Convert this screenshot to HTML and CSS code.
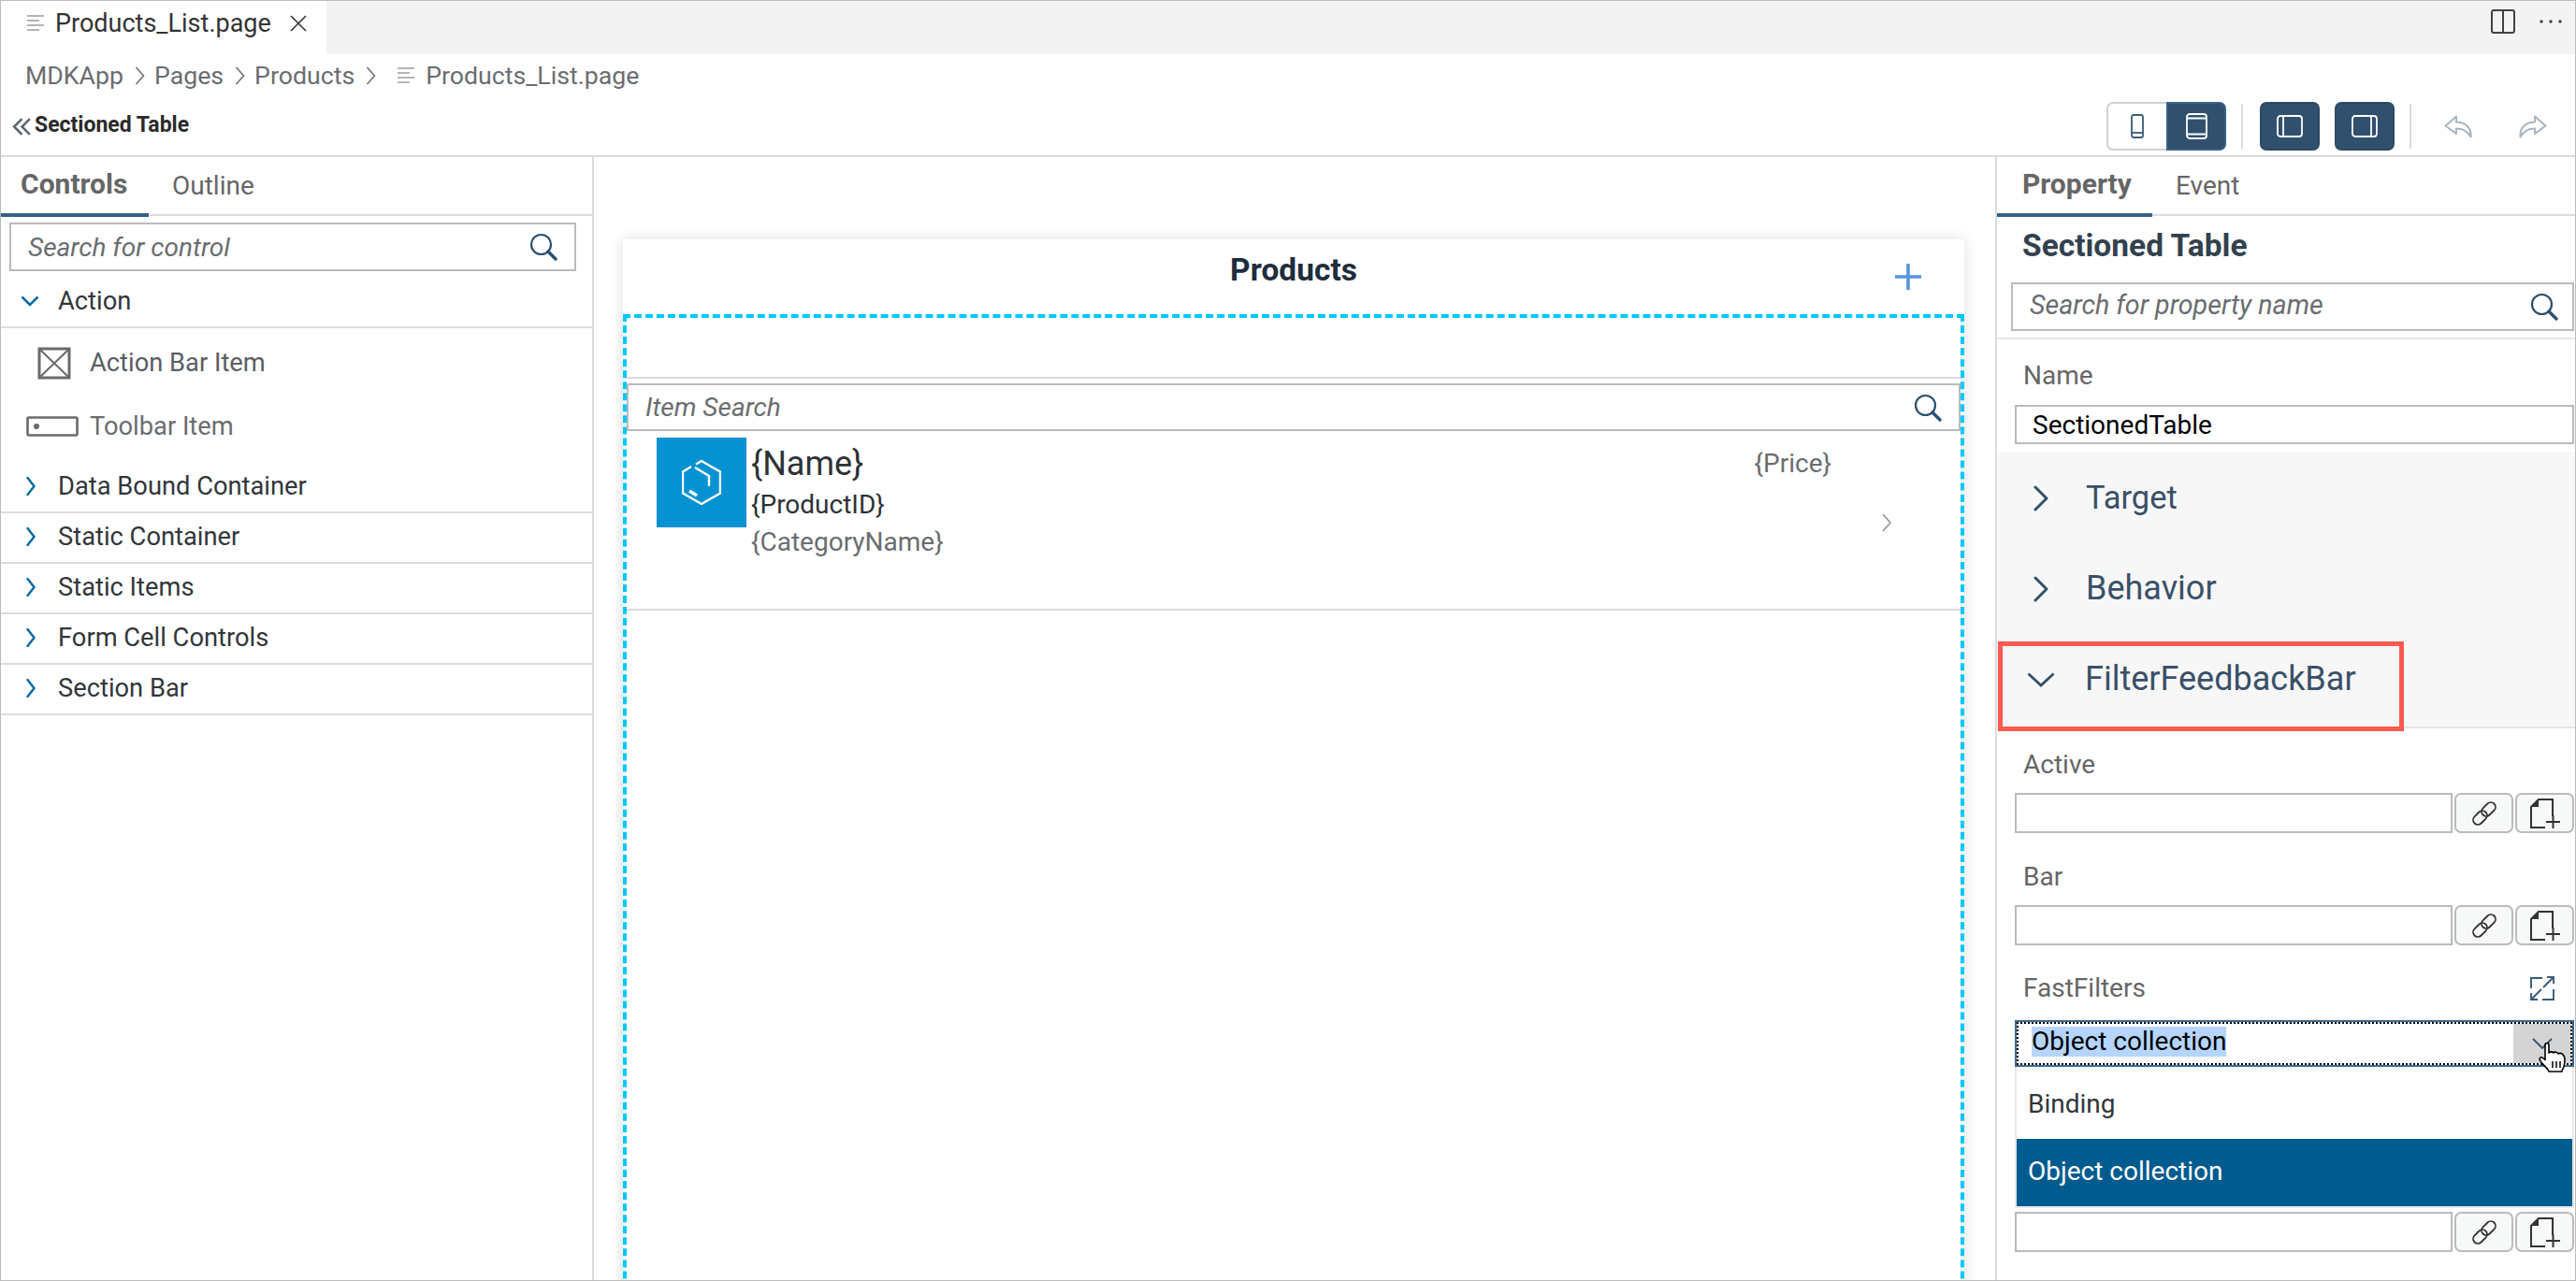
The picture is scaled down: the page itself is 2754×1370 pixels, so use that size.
FILE: index.html
```html
<!DOCTYPE html>
<html lang="en">
<head>
<meta charset="utf-8">
<title>Products_List.page</title>
<link rel="stylesheet" href="styles.css">
</head>
<body>
<svg class="defs" width="0" height="0" aria-hidden="true">
  <symbol id="i-file" viewBox="0 0 18 18"><path d="M0 1h18M0 6h13M0 11h18M0 16h13" fill="none" stroke="#b5b5b5" stroke-width="2.2"/></symbol>
  <symbol id="i-search" viewBox="0 0 30 30"><circle cx="12.5" cy="12.5" r="10.5" fill="none" stroke="#2b4f6e" stroke-width="2.2"/><path d="M20 20l8 8" stroke="#2b4f6e" stroke-width="3.4" stroke-linecap="round"/></symbol>
  <symbol id="i-right" viewBox="0 0 10 20"><path d="M1.500 1l7 9-7 9" fill="none" stroke="currentColor" stroke-width="2.500" stroke-linecap="round" stroke-linejoin="round"/></symbol>
  <symbol id="i-thin" viewBox="0 0 11 20"><path d="M1.500 1l8 9-8 9" fill="none" stroke="currentColor" stroke-width="1.500"/></symbol>
  <symbol id="i-sec" viewBox="0 0 16 28"><path d="M2 2l12 12L2 26" fill="none" stroke="currentColor" stroke-width="3" stroke-linecap="round" stroke-linejoin="round"/></symbol>
  <symbol id="i-link" viewBox="0 0 28 28"><g fill="none" stroke="#333" stroke-width="1.800"><rect x="13.500" y="1" width="10" height="17" rx="5" transform="rotate(45 18.500 9.500)"/><rect x="4.500" y="10" width="10" height="17" rx="5" transform="rotate(45 9.500 18.500)"/></g></symbol>
  <symbol id="i-doc" viewBox="0 0 34 34"><path d="M25 20V2H10L2 10v22h15" fill="none" stroke="#333" stroke-width="2"/><path d="M2 10l8-8v8z" fill="#333"/><path d="M18 26h15M25.500 19v14" fill="none" stroke="#333" stroke-width="2"/></symbol>
</svg>

<div class="app">
  <header class="tabbar">
    <div class="file-tab">
      <svg class="file-icon"><use href="#i-file"/></svg>
      <span class="file-tab-name">Products_List.page</span>
      <svg class="close-icon" viewBox="0 0 18 18"><path d="M1 1l16 16M17 1L1 17" stroke="#333" stroke-width="1.6"/></svg>
    </div>
    <div class="tab-actions">
      <svg class="split-icon" viewBox="0 0 26 26"><rect x="1" y="1" width="24" height="24" rx="2" fill="none" stroke="#424242" stroke-width="2"/><path d="M13 1v24" stroke="#424242" stroke-width="2"/></svg>
      <svg class="dots-icon" viewBox="0 0 24 4"><circle cx="2" cy="2" r="1.700" fill="#424242"/><circle cx="12" cy="2" r="1.700" fill="#424242"/><circle cx="22" cy="2" r="1.700" fill="#424242"/></svg>
    </div>
  </header>

  <nav class="crumbs">
    <span class="crumb-a">MDKApp</span><svg class="crumb-chev"><use href="#i-thin"/></svg>
    <span>Pages</span><svg class="crumb-chev"><use href="#i-thin"/></svg>
    <span>Products</span><svg class="crumb-chev"><use href="#i-thin"/></svg>
    <svg class="file-icon file-icon-crumb"><use href="#i-file"/></svg><span class="crumb-last">Products_List.page</span>
  </nav>

  <div class="toolbar">
    <svg class="back-icon" viewBox="0 0 20 18"><path d="M10 1L2 9l8 8M18 1l-8 8 8 8" fill="none" stroke="#5b6770" stroke-width="2.400"/></svg>
    <span class="toolbar-title">Sectioned Table</span>
    <div class="tools">
      <div class="segmented">
        <button class="tool tool-light"><svg class="phone-icon" viewBox="0 0 14 26"><rect x="1" y="1" width="12" height="24" rx="2" fill="none" stroke="#3d5a75" stroke-width="1.800"/><path d="M1 20h12" stroke="#3d5a75" stroke-width="1.800"/></svg></button>
        <button class="tool tool-dark tool-seg"><svg class="tablet-icon" viewBox="0 0 23 28"><rect x="1" y="1" width="21" height="26" rx="3" fill="none" stroke="#fff" stroke-width="1.800"/><path d="M1 5.500h21M1 22.500h21" stroke="#fff" stroke-width="1.800"/></svg></button>
      </div>
      <i class="tool-sep"></i>
      <button class="tool tool-dark"><svg class="panel-icon" viewBox="0 0 28 24"><rect x="1" y="1" width="26" height="22" rx="3" fill="none" stroke="#fff" stroke-width="1.800"/><path d="M7 1v22" stroke="#fff" stroke-width="1.800"/></svg></button>
      <button class="tool tool-dark"><svg class="panel-icon" viewBox="0 0 28 24"><rect x="1" y="1" width="26" height="22" rx="3" fill="none" stroke="#fff" stroke-width="1.800"/><path d="M21 1v22" stroke="#fff" stroke-width="1.800"/></svg></button>
      <i class="tool-sep"></i>
      <svg class="undo-icon" viewBox="0 0 30 25"><path d="M13 1.500L1.500 11.500 13 20v-5.500c7 0 12 2.500 15.500 9 1-10-6-16-15.500-16z" fill="none" stroke="#a9b5bf" stroke-width="2" stroke-linejoin="round"/></svg>
      <svg class="redo-icon" viewBox="0 0 30 25"><path d="M17 1.500L28.500 11.500 17 20v-5.500c-7 0-12 2.500-15.500 9-1-10 6-16 15.500-16z" fill="none" stroke="#a9b5bf" stroke-width="2" stroke-linejoin="round"/></svg>
    </div>
  </div>

  <main class="main">
    <aside class="left">
      <div class="tabs">
        <div class="tab tab-on tab-controls">Controls</div>
        <div class="tab tab-outline">Outline</div>
      </div>
      <div class="search search-left">
        <span class="placeholder ph-control">Search for control</span>
        <svg class="search-icon"><use href="#i-search"/></svg>
      </div>
      <div class="group group-open">
        <svg class="group-down" viewBox="0 0 20 12"><path d="M1.500 1.500L10 10l8.500-8.500" fill="none" stroke="#0a6ca3" stroke-width="2.600"/></svg>
        <span class="group-label">Action</span>
      </div>
      <div class="sub-list">
        <div class="sub-item">
          <span class="sub-icon"><svg class="abi-icon" viewBox="0 0 36 35"><rect x="2" y="2" width="32" height="31" fill="none" stroke="#6b6b6b" stroke-width="3"/><path d="M3 3l30 29M33 3L3 32" stroke="#6b6b6b" stroke-width="2"/></svg></span>
          <span>Action Bar Item</span>
        </div>
        <div class="sub-item">
          <span class="sub-icon"><svg class="tbi-icon" viewBox="0 0 56 22"><rect x="1.500" y="1.500" width="53" height="19" rx="1.500" fill="none" stroke="#6b6b6b" stroke-width="2.600"/><circle cx="11" cy="11" r="3" fill="#6b6b6b"/></svg></span>
          <span class="sub-muted">Toolbar Item</span>
        </div>
      </div>
      <div class="group"><svg class="group-right"><use href="#i-right"/></svg><span class="group-label">Data Bound Container</span></div>
      <div class="group"><svg class="group-right"><use href="#i-right"/></svg><span class="group-label">Static Container</span></div>
      <div class="group"><svg class="group-right"><use href="#i-right"/></svg><span class="group-label">Static Items</span></div>
      <div class="group"><svg class="group-right"><use href="#i-right"/></svg><span class="group-label">Form Cell Controls</span></div>
      <div class="group"><svg class="group-right"><use href="#i-right"/></svg><span class="group-label">Section Bar</span></div>
    </aside>

    <section class="canvas">
      <div class="card">
        <div class="card-head">
          <span></span>
          <span class="card-title">Products</span>
          <svg class="plus-icon" viewBox="0 0 28 28"><path d="M14 0v28M0 14h28" stroke="#5594da" stroke-width="3.600"/></svg>
        </div>
        <div class="selection">
          <div class="blank-row"></div>
          <div class="search search-item">
            <span class="placeholder ph-item">Item Search</span>
            <svg class="search-icon"><use href="#i-search"/></svg>
          </div>
          <div class="item">
            <div class="tile">
              <svg class="hex-icon" viewBox="0 0 42 48"><path d="M15 4.500L21 1l20 11.500v23L21 47 1 35.500v-23L10 7" fill="none" stroke="#fff" stroke-width="2.400"/><path d="M14 8l15 9v11" fill="none" stroke="#fff" stroke-width="2.400"/><path d="M8 33l8 5" stroke="#fff" stroke-width="3.400"/></svg>
            </div>
            <div class="item-text">
              <div class="item-name">{Name}</div>
              <div class="item-id">{ProductID}</div>
              <div class="item-cat">{CategoryName}</div>
            </div>
            <div class="item-price">{Price}</div>
            <svg class="item-chev" viewBox="0 0 10 20"><path d="M1 1l8 9-8 9" fill="none" stroke="#8a8a8a" stroke-width="1.400"/></svg>
          </div>
        </div>
      </div>
    </section>

    <aside class="right">
      <div class="tabs">
        <div class="tab tab-on tab-property">Property</div>
        <div class="tab tab-event">Event</div>
      </div>
      <h2 class="prop-title">Sectioned Table</h2>
      <div class="prop-search-wrap">
        <div class="search search-prop">
          <span class="placeholder ph-prop">Search for property name</span>
          <svg class="search-icon"><use href="#i-search"/></svg>
        </div>
      </div>
      <div class="field field-name">
        <div class="field-label">Name</div>
        <div class="input input-full"><span class="input-value">SectionedTable</span></div>
      </div>
      <div class="sections">
        <div class="section"><svg class="sec-right"><use href="#i-sec"/></svg><span class="sec-target">Target</span></div>
        <div class="section"><svg class="sec-right"><use href="#i-sec"/></svg><span class="sec-behavior">Behavior</span></div>
        <div class="section">
          <svg class="sec-down" viewBox="0 0 30 16"><path d="M1.500 1.500L15 14 28.500 1.500" fill="none" stroke="#34506b" stroke-width="2.800"/></svg>
          <span class="sec-filter">FilterFeedbackBar</span>
          <div class="callout"></div>
        </div>
      </div>
      <div class="fields">
        <div class="field-label label-active">Active</div>
        <div class="bind-row">
          <div class="input"></div>
          <button class="bind-btn"><svg class="link-icon"><use href="#i-link"/></svg></button>
          <button class="bind-btn"><svg class="doc-icon"><use href="#i-doc"/></svg></button>
        </div>
        <div class="field-label label-bar">Bar</div>
        <div class="bind-row">
          <div class="input"></div>
          <button class="bind-btn"><svg class="link-icon"><use href="#i-link"/></svg></button>
          <button class="bind-btn"><svg class="doc-icon"><use href="#i-doc"/></svg></button>
        </div>
        <div class="field-label label-fast">
          <span>FastFilters</span>
          <svg class="expand-icon" viewBox="0 0 28 28"><g fill="none" stroke="#3c5a76" stroke-width="1.900"><path d="M2 14V3h12M26 15v11H14"/><path d="M15 13L26 2M19 2h7v7"/><path d="M13 15L2 26M2 19v7h7"/></g></svg>
        </div>
        <div class="select">
          <div class="select-inner">
            <span class="select-value">Object collection</span>
            <span class="select-arrow"><svg class="select-chev" viewBox="0 0 22 12"><path d="M1 1l10 10L21 1" fill="none" stroke="#34506b" stroke-width="1.800"/></svg></span>
          </div>
          <svg class="hand" viewBox="0 0 30 32"><path d="M7 3C7 1.300 8 .5 9 .5c1.500 0 2 1 2 2.500v8c1-1.500 4-1.500 5 0 1-1.500 4-1 5 1 1-1 4-1 5 1 1.500 1 2 3 2 6 0 5-1 8-3 11v1H11l-1-2c-2-3-7-7-8.500-10-1-2 .5-4 2.500-3l3 2.500z" fill="#fff" stroke="#000" stroke-width="1.600" stroke-linejoin="round"/><path d="M15 20v7M19 20v7M23 20v7" stroke="#000" stroke-width="1.500"/></svg>
        </div>
        <div class="options">
          <div class="option">Binding</div>
          <div class="option option-on">Object collection</div>
        </div>
        <div class="bind-row">
          <div class="input"></div>
          <button class="bind-btn"><svg class="link-icon"><use href="#i-link"/></svg></button>
          <button class="bind-btn"><svg class="doc-icon"><use href="#i-doc"/></svg></button>
        </div>
      </div>
    </aside>
  </main>
</div>
</body>
</html>
```
FILE: styles.css
```css
* { box-sizing: border-box; }
html, body { margin: 0; padding: 0; background: #fff; }
body { font-family: Roboto, "Liberation Sans", sans-serif; font-size: 28px; color: #32363a; }
svg { display: block; flex: none; }
.defs { position: absolute; }
button { padding: 0; margin: 0; font: inherit; }

.app { width: 2754px; height: 1370px; display: flex; flex-direction: column; overflow: hidden; border: 1px solid #bcbcbc; }

/* tab strip */
.tabbar { height: 57px; flex: none; display: flex; align-items: flex-start; background: #f3f3f3; }
.file-tab { width: 348px; height: 57px; background: #fff; display: flex; align-items: center; padding: 0 0 10px 28px; font-size: 27px; }
.file-icon { width: 18px; height: 18px; }
.file-tab-name { margin-left: 12px; color: #333; }
.close-icon { width: 18px; height: 18px; margin-left: 20px; }
.tab-actions { margin-left: auto; height: 44px; display: flex; align-items: center; padding-right: 14px; }
.split-icon { width: 26px; height: 26px; }
.dots-icon { width: 24px; height: 4px; margin-left: 26px; }

/* breadcrumbs */
.crumbs { height: 46px; flex: none; display: flex; align-items: center; padding-left: 26px; color: #6a6d70; font-size: 26.7px; }
.crumb-chev { width: 11px; height: 20px; margin: 0 10px 0 12px; color: #6a6d70; }
.file-icon-crumb { margin: 0 12px 0 13px; }

/* toolbar */
.toolbar { height: 64px; flex: none; display: flex; align-items: center; border-bottom: 2px solid #dcdcdc; padding: 0 30px 0 12px; }
.back-icon { width: 21px; height: 19px; margin-right: 3px; }
.toolbar-title { font-size: 23px; font-weight: 700; color: #2a2a2a; padding-bottom: 3px; }
.tools { margin-left: auto; display: flex; align-items: center; }
.segmented { display: flex; }
.tool { width: 64px; height: 52px; display: flex; align-items: center; justify-content: center; border-radius: 7px; border: 2px solid transparent; }
.tool-light { background: #fff; border-color: #d2d2d2; border-right: 0; border-radius: 7px 0 0 7px; }
.tool-dark { background: #30506e; border-color: #2e4a64; }
.tool-seg { border-radius: 0 7px 7px 0; border-color: #3a6287; }
.tools > .tool-dark { margin-left: 16px; }
.tools > .tool-sep + .tool-dark { margin-left: 18px; }
.tool-sep { width: 2px; height: 48px; background: #dcdcdc; margin-left: 16px; }
.phone-icon { width: 14px; height: 26px; }
.tablet-icon { width: 23px; height: 28px; }
.panel-icon { width: 28px; height: 24px; }
.undo-icon { width: 30px; height: 25px; margin-left: 35px; }
.redo-icon { width: 30px; height: 25px; margin-left: 50px; }

/* main */
.main { flex: 1; min-height: 0; display: flex; overflow: hidden; }
.left { width: 634px; flex: none; border-right: 2px solid #dcdcdc; }
.canvas { flex: 1; min-width: 0; padding: 88px 33px 0 31px; overflow: hidden; }
.right { width: 620px; flex: none; border-left: 2px solid #dcdcdc; }

/* tabs */
.tabs { height: 63px; display: flex; align-items: flex-start; border-bottom: 2px solid #dcdce2; }
.tab { height: 64px; display: flex; align-items: center; padding-bottom: 3px; color: #666; }
.tab-on { font-size: 30px; font-weight: 700; border-bottom: 4px solid #376089; }
.tab-controls { width: 158px; padding-left: 21px; }
.tab-outline { padding-left: 25px; }
.tab-property { width: 166px; padding-left: 27px; }
.tab-event { padding-left: 25px; }

/* search */
.search { display: flex; align-items: center; height: 52px; border: 2px solid #bbb; background: #fff; }
.search-left { width: 606px; margin: 7px 0 0 9px; padding: 0 18px 0 18px; }
.placeholder { font-style: italic; color: #6a6d70; }
.search-icon { width: 30px; height: 30px; margin-left: auto; }

/* left groups */
.group { height: 54px; display: flex; align-items: center; border-bottom: 2px solid #dcdce2; padding: 0 0 3px 27px; }
.group-open { height: 61px; padding: 4px 0 0 21px; }
.group-right { width: 10px; height: 20px; color: #0a6ca3; }
.group-down { width: 20px; height: 12px; margin-right: 20px; }
.group-label { font-size: 27.3px; color: #32363a; }
.group-right + .group-label { margin-left: 24px; }
.sub-list { padding: 3px 0 5px; }
.sub-item { height: 68px; display: flex; align-items: center; font-size: 27.3px; color: #5a5e63; }
.sub-icon { width: 95px; display: flex; justify-content: center; padding-left: 18px; }
.sub-muted { color: #6a6d70; }
.abi-icon { width: 36px; height: 35px; }
.tbi-icon { width: 56px; height: 22px; margin-left: -3px; }

/* phone card */
.card { height: 1300px; background: #fff; box-shadow: 0 0 14px rgba(0, 0, 0, .13); }
.card-head { height: 80px; display: grid; grid-template-columns: 1fr auto 1fr; align-items: center; padding-right: 46px; }
.card-title { font-size: 33.5px; font-weight: 700; color: #1d2d3e; margin-bottom: 16px; margin-left: 46px; }
.plus-icon { width: 28px; height: 28px; justify-self: end; }
.selection { height: 1200px; border: 4px dashed #00c8ff; }
.blank-row { height: 65px; border-bottom: 2px solid #dcdcdc; }
.search-item { height: 51px; margin-top: 5px; padding: 0 18px; }
.item { height: 192px; display: flex; align-items: flex-start; border-bottom: 2px solid #dcdcdc; padding: 7px 0 0 32px; }
.tile { width: 96px; height: 96px; background: #0492d2; display: flex; align-items: center; justify-content: center; }
.hex-icon { width: 42px; height: 48px; }
.item-text { margin-left: 5px; }
.item-name { font-size: 36px; line-height: 56px; color: #2e3236; }
.item-id { font-size: 28px; line-height: 32px; color: #2e3236; }
.item-cat { font-size: 28px; line-height: 48px; color: #6a6d70; }
.item-price { margin-left: auto; font-size: 28px; line-height: 56px; color: #6a6d70; }
.item-chev { width: 10px; height: 20px; margin: 81px 74px 0 54px; }

/* property pane */
.prop-title { margin: 0 0 7px; height: 64px; padding-left: 27px; font-size: 33.5px; line-height: 64px; font-weight: 700; color: #32414e; }
.prop-search-wrap { height: 61px; border-bottom: 2px solid #e5e5e5; padding-left: 15px; }
.search-prop { width: 602px; padding: 0 15px 0 18px; }
.ph-prop { font-size: 28.6px; padding-bottom: 4px; }
.field-name { height: 121px; padding: 19px 1px 0 19px; }
.field-label { height: 40px; line-height: 40px; color: #666; padding-left: 9px; }
.fields .field-label { line-height: 42px; }
.input { height: 43px; flex: 1; border: 2px solid #bbb; background: #fff; }
.input-full { height: 42px; margin-top: 11px; display: flex; align-items: center; padding-left: 17px; }
.input-value { color: #000; }

.sections { background: #f7f7f7; border-bottom: 2px solid #e5e5e5; padding-bottom: 2px; }
.section { position: relative; height: 97px; display: flex; align-items: center; color: #3a5068; font-size: 36px; padding-left: 39px; }
.sec-right { width: 16px; height: 28px; color: #34506b; }
.sec-down { width: 30px; height: 16px; margin-left: -7px; margin-right: 32px; }
.sec-right + span { margin-left: 40px; padding-bottom: 2px; }
.sec-target { font-size: 34.5px; }
.sec-filter { padding-bottom: 2px; }
.callout { position: absolute; left: 1px; top: 8px; width: 434px; height: 96px; border: 5px solid #ff5a4f; }

.fields { padding: 18px 1px 0 19px; }
.bind-row { display: flex; height: 43px; margin: 11px 0 26px; }
.bind-btn { width: 63px; height: 43px; margin-left: 2px; display: flex; align-items: center; justify-content: center; background: #f7f8f8; border: 2px solid #bbb; border-radius: 7px; }
.link-icon { width: 28px; height: 28px; }
.doc-icon { width: 34px; height: 34px; }
.label-fast { display: flex; align-items: center; justify-content: space-between; padding-right: 20px; }
.label-fast + .select { margin-top: 14px; }
.expand-icon { width: 28px; height: 28px; }
.select { position: relative; height: 50px; border: 2px solid #3f6a8d; }
.select-inner { height: 46px; display: flex; align-items: center; border: 2px dotted #000; padding-left: 14px; }
.select-value { color: #000; background: #b5d5ff; line-height: 32px; margin-bottom: 5px; }
.select-arrow { margin-left: auto; width: 61px; height: 42px; background: #d4d4d4; display: flex; justify-content: center; align-items: center; }
.select-chev { width: 22px; height: 12px; }
.hand { position: absolute; left: 558px; top: 22px; width: 30px; height: 32px; }
.options { height: 151px; border: 2px solid #e8e8e4; border-top: 0; background: #fff; display: flex; flex-direction: column; margin-bottom: -7px; }
.option { flex: 1; display: flex; align-items: center; padding: 2px 0 0 12px; color: #32363a; }
.option-on { flex: none; height: 72px; padding: 0 0 3px 12px; background: #005b8e; color: #fff; }
```
